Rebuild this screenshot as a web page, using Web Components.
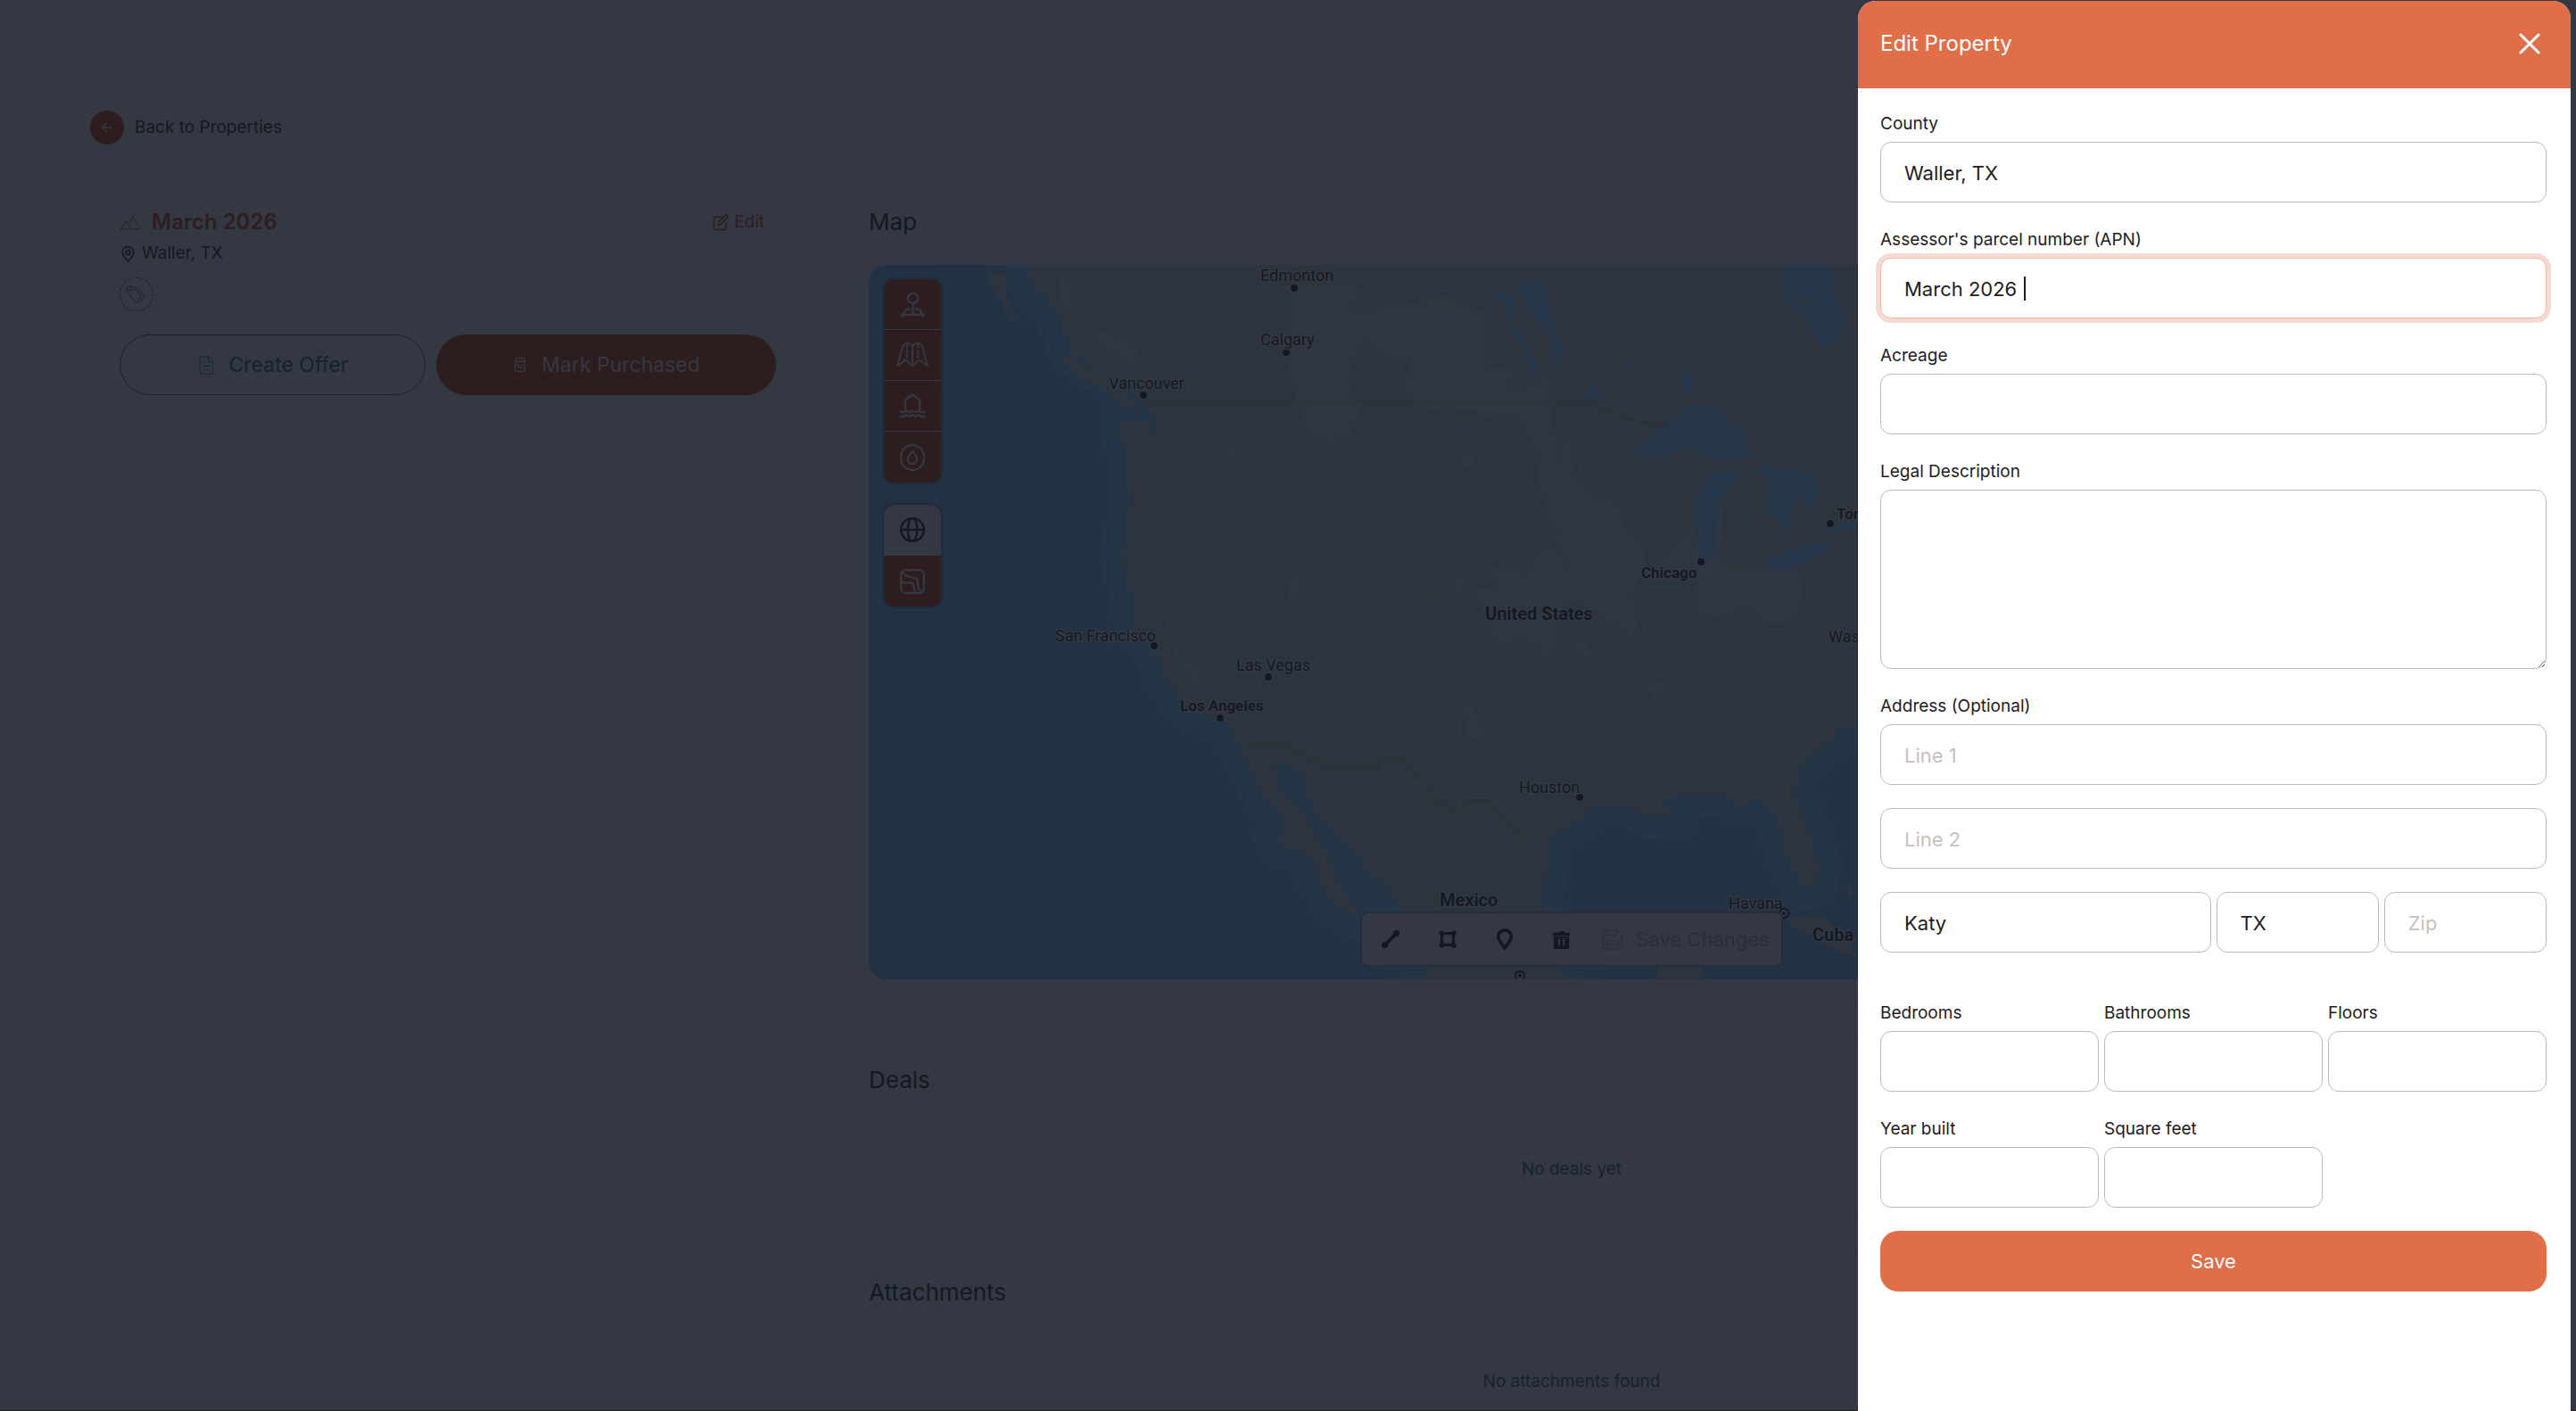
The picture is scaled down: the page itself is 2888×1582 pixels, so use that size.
<!DOCTYPE html>
<html lang="en">
<head>
<meta charset="utf-8">
<title>Edit Property</title>
<style>
  :root {
    --page: #343842; --line: #30353f; --ink: #131824; --ink-soft: #172130;
    --brand-dim: #2e1d1f; --brand: #df6e49; --faint: #292d39;
  }
  body { margin: 0; font-family: Inter, "Liberation Sans", sans-serif; background: var(--page); }
</style>
</head>
<body>
<app-shell>
  <back-link>Back to Properties</back-link>
  <content-columns>
    <property-summary heading="March 2026" place="Waller, TX"></property-summary>
    <panel-stack slot="main">
      <info-panel heading="Map"><property-map></property-map></info-panel>
      <info-panel heading="Deals"><empty-note>No deals yet</empty-note></info-panel>
      <info-panel heading="Attachments"><empty-note>No attachments found</empty-note></info-panel>
    </panel-stack>
  </content-columns>
</app-shell>
<side-drawer heading="Edit Property">
  <form-field label="County" value="Waller, TX"></form-field>
  <form-field label="Assessor's parcel number (APN)" value="March 2026 " active></form-field>
  <form-field label="Acreage"></form-field>
  <form-field label="Legal Description" multiline></form-field>
  <form-field label="Address (Optional)" placeholder="Line 1"></form-field>
  <form-field name="Line 2" placeholder="Line 2"></form-field>
  <field-grid columns="4">
    <form-field name="City" value="Katy" wide></form-field>
    <form-field name="State" value="TX"></form-field>
    <form-field name="Zip" placeholder="Zip"></form-field>
  </field-grid>
  <field-grid columns="3" spaced>
    <form-field label="Bedrooms"></form-field>
    <form-field label="Bathrooms"></form-field>
    <form-field label="Floors"></form-field>
    <form-field label="Year built"></form-field>
    <form-field label="Square feet"></form-field>
  </field-grid>
  <save-button>Save</save-button>
</side-drawer>

<script>
const define = (name, render) => customElements.define(name, class extends HTMLElement {
  connectedCallback() {
    if (this.shadowRoot) return;
    this.attachShadow({ mode: 'open' }).innerHTML =
      '<style>*,:host{box-sizing:border-box}button{font:inherit;color:inherit;background:none;border:0;padding:0;margin:0;cursor:pointer}</style>' + render(this);
  }
});

const icons = {
  back: '<path d="M20 12H4M11 5l-7 7 7 7"/>',
  mountains: '<path d="M1 20h22L15 6l-5 8M1 20l6-9 6 9"/>',
  edit: '<path d="M13 4H5a2 2 0 0 0-2 2v14a2 2 0 0 0 2 2h13a2 2 0 0 0 2-2v-8M9 16l1-5 9-9.500a2 2 0 0 1 3 3L13 14z"/>',
  pin: '<path d="M12 23c-4-5-8-9-8-13a8 8 0 0 1 16 0c0 4-4 8-8 13z"/><circle cx="12" cy="10" r="3"/>',
  tags: '<path d="M1 3v7l11 12 6-7L8 3zM11 3l11 11-6 8"/><circle cx="5" cy="7" r="1.500"/>',
  doc: '<path d="M4 1h11l5 6v16H4zM14 1v7h6M8 8h3M8 13h8M8 18h8"/>',
  bag: '<path d="M5 6l2-4h10l2 4v14a2 2 0 0 1-2 2H7a2 2 0 0 1-2-2zM5 7h14M9 11v2a3 3 0 0 0 6 0v-2"/>',
  parcel: '<circle cx="12" cy="5.500" r="5"/><path d="M12 10.500V22M9.500 16.500H5L2 24M14.500 16.500H19L22 24M.500 22h23"/>',
  map: '<path d="M4.500 4.500Q8.500 0 12.500 4.500 16.500 0 20.500 4.500L25 21l-7-5-5.500 5L7 16l-7 5zM12.500 4.500V21"/><path stroke-dasharray="2 2" d="M8 4v12M17 4v12"/>',
  flood: '<path d="M5 16V6.500L12 1l7 5.500V16M.500 17.500q3 2 5.500-1 3 3 6 0 3 3 6 0 2.500 3 5.500 1M.500 22q3 1.500 5.500-1.500 3 3 6 0 3 3 6 0 2.500 3 5.500 1.500"/>',
  drop: '<path d="M1 13a11 11 0 0 0 22 0"/><path stroke-dasharray="4 2" d="M1 11a11 11 0 0 1 22 0"/><path d="M12 6c3 3.500 4.500 5 4.500 7.500a4.500 4.500 0 0 1-9 0C7.500 11 9 9.500 12 6z"/>',
  globe: '<circle cx="12" cy="12" r="11"/><ellipse cx="12" cy="12" rx="4.500" ry="11"/><path d="M1 12h22"/>',
  terrain: '<rect x="1" y="1" width="22" height="22" rx="4"/><path d="M2 3c4 5 6 4 10 5 4 0 5 1 5 6s2 7 4 8M1 12c3 2 6 1 9 1 4 0 3 5 4.500 10"/>',
  line: '<path stroke-width="4" d="M5 19 19 5"/><circle fill="currentColor" cx="5" cy="19" r="3"/><circle fill="currentColor" cx="19" cy="5" r="3"/>',
  poly: '<path stroke-width="3.500" d="M5 5h14v14H5z"/><g fill="currentColor"><circle cx="4.500" cy="4.500" r="2"/><circle cx="19.500" cy="4.500" r="2"/><circle cx="4.500" cy="19.500" r="2"/><circle cx="19.500" cy="19.500" r="2"/></g>',
  marker: '<path stroke-width="4" d="M12 23C8 17 4 13 4 9a8 8 0 0 1 16 0c0 4-4 8-8 14z"/>',
  trash: '<path fill="currentColor" stroke="none" d="M1 3h7l1-2h6l1 2h7v4H1zM2 8h20v13a3 3 0 0 1-3 3H5a3 3 0 0 1-3-3z"/><path stroke="#343842" stroke-width="2" d="M9 11v8M15 11v8"/>',
  disk: '<path d="M4 1h13l6 6v13a3 3 0 0 1-3 3H4a3 3 0 0 1-3-3V4a3 3 0 0 1 3-3zM6 1v6h10V1M5 23V13h14v10M5 17h14"/>',
  close: '<path d="M2 2l20 20M22 2 2 22"/>'
};
const icon = (name, size = 24, weight = 2) =>
  `<svg aria-hidden="true" width="${size}" height="${size}" viewBox="0 0 ${name === 'map' ? 25 : 24} 24" fill="none" stroke="currentColor" stroke-width="${weight}" stroke-linecap="round" stroke-linejoin="round" overflow="visible">${icons[name]}</svg>`;

define('app-shell', () => `
  <style>
    :host { display: block; height: 100vh; overflow: hidden; padding: 124px 305px 0 101px; background: var(--page); color: var(--ink); border-bottom: 1px solid var(--brand-dim); }
  </style><slot></slot>`);

define('back-link', () => `
  <style>
    :host { display: block; font-size: 19px; line-height: 38px; margin-bottom: 40px; }
    a { display: inline-flex; align-items: center; gap: 12px; color: inherit; text-decoration: none; vertical-align: top; }
    span { width: 38px; height: 38px; border-radius: 50%; background: var(--brand-dim); color: var(--page); display: grid; place-items: center; }
  </style><a href="#properties"><span>${icon('back', 16)}</span><slot></slot></a>`);

define('content-columns', () => `
  <style>:host { display: grid; grid-template-columns: 802fr 1642fr; gap: 38px; }</style>
  <slot></slot><slot name="main"></slot>`);

define('panel-stack', () => `
  <style>:host { display: flex; flex-direction: column; gap: 37px; min-width: 0; }</style><slot></slot>`);

define('property-summary', el => `
  <style>
    :host { display: block; border: 1px solid var(--line); border-radius: 20px; padding: 30px 32px; }
    header { display: flex; align-items: center; justify-content: space-between; line-height: 32px; color: var(--brand-dim); }
    h1 { display: flex; align-items: center; gap: 12px; margin: 0; font-size: 24px; font-weight: 600; }
    .edit { display: flex; align-items: center; gap: 6px; font-size: 19px; margin-right: 13px; }
    .place { display: flex; align-items: center; gap: 6px; margin: 5px 0 13px; font-size: 19px; line-height: 28px; }
    .tag { width: 38px; height: 38px; border: 1px dashed var(--ink-soft); border-radius: 50%; display: grid; place-items: center; color: var(--ink-soft); }
    .actions { display: grid; grid-template-columns: 343fr 381fr; gap: 12px; margin-top: 26px; font-size: 23px; }
    .actions button { height: 68px; border-radius: 34px; display: flex; align-items: center; justify-content: center; gap: 15px; }
    .outline { border: 1px solid var(--ink-soft); color: var(--ink-soft); }
    .solid { background: var(--brand-dim); color: var(--page); }
  </style>
  <header><h1>${icon('mountains', 24, 1)}${el.getAttribute('heading')}</h1>
    <button class="edit">${icon('edit', 19, 2)}Edit</button></header>
  <p class="place">${icon('pin', 19)}${el.getAttribute('place')}</p>
  <button class="tag" aria-label="Tags">${icon('tags', 22, 1)}</button>
  <div class="actions">
    <button class="outline">${icon('doc', 21, 1)}Create Offer</button>
    <button class="solid">${icon('bag', 18, 2)}Mark Purchased</button>
  </div>`);

define('info-panel', el => `
  <style>
    :host { display: block; border: 1px solid var(--line); border-radius: 20px; padding: 29px 32px 28px; }
    h2 { margin: 0; font-size: 26px; line-height: 34px; font-weight: 400; }
  </style><h2>${el.getAttribute('heading')}</h2><slot></slot>`);

define('empty-note', () => `
  <style>:host { display: block; margin-top: 69px; padding-bottom: 11px; text-align: center; font-size: 19px; line-height: 28px; color: var(--ink-soft); }</style><slot></slot>`);

const cities = [
  ['Edmonton', 1413, 315, 1451, 323], ['Calgary', 1413, 387, 1442, 395], ['Vancouver', 1243, 436, 1282, 443],
  ['San Francisco', 1183, 719, 1294, 724], ['Las Vegas', 1386, 752, 1422, 759],
  ['Los Angeles', 1323, 797, 1368, 805, 1], ['Chicago', 1840, 648, 1907, 630, 1],
  ['Toronto', 2059, 582, 2052, 587, 1], ['Houston', 1703, 889, 1771, 894], ['Washington', 2050, 720, 2130, 730]
];
const cityMarks = cities.map(([name, x, y, dx, dy, bold]) =>
  `<circle cx="${dx}" cy="${dy}" r="4"/><text x="${x}" y="${y}"${bold ? ' font-size="17" font-weight="600"' : ''}>${name}</text>`).join('');
const coast = 'M1155 297l-4 11 14 22 9-8v18l14 12 2 18 6 5 2 20 17 7 7 10 18 3 10 15 20 10 12 15 8 7 6 16-3 16-5-19-20-3-12-2 2 20 7 25v25l3 20-6 35-4 25 4 30 8 20 2 30 8 12 14 16 9 17 2 12 15 18 5 15 20 11 15 2 15 9 10 13 10 25 13 25 7 20 15 10 12 20-2 10-10 3 10 12 20 5 15 15 3 20 17 20 15 12 8 6 4-6-7-14-15-13-5-25-15-25-10-15-15-25-20-20-5-15-2-12 4-6 13 6 15 7 5 25 10 20 25 25 10 10 15 15 5 15 20 15 20 25 10 25 10 20 8 30 7 18h148l-8-38-15-40-2-35 7-20v-20l5-17 20-13 18-10 2-8 20-4h25l15 8 10 5 20-3 8 6-3-13-15-5 15-8 25-2h35l15 13 20-8 15 10 10 20 7 32 20 37 13-2 3-22-7-30-10-25-10-30 10-30 30-25 10-12 18-3 50-60 100-50 317-80V297z';

define('property-map', () => `
  <style>
    :host { display: grid; position: relative; margin-top: 31px; height: 801px; border-radius: 20px; overflow: hidden; background: #223143; }
    .canvas { grid-area: 1/1; width: 100%; height: 100%; display: block; font-family: Roboto, sans-serif; font-size: 18px; }
    .layers { position: absolute; left: 17px; top: 16px; display: grid; gap: 25px; color: var(--page); }
    .group { width: 64px; border-radius: 12px; overflow: hidden; background: var(--brand-dim); box-shadow: 0 0 0 2px #1e2b3b; }
    .group button { display: grid; place-items: center; width: 64px; height: 57px; border-bottom: 1px solid var(--page); }
    .group button:last-child { border-bottom: 0; }
    .group .on { background: var(--page); color: var(--ink); }
    .tools { position: absolute; bottom: 16px; left: 50%; transform: translateX(-50%); display: flex; height: 58px; background: var(--page); border-radius: 6px; box-shadow: 0 0 0 2px #272d38; }
    .tools button { width: 64px; display: grid; place-items: center; border-right: 1px solid var(--line); }
    .tools .save { width: 214px; display: flex; align-items: center; justify-content: center; gap: 15px; border: 0; font-size: 22px; color: var(--faint); }
  </style>
  <svg class="canvas" viewBox="974 297 1576 801" preserveAspectRatio="xMinYMin slice" role="img" aria-label="Map of North America">
    <g fill="none" stroke-linejoin="round"><path d="${coast}" stroke="#233345" stroke-width="90"/><path d="${coast}" stroke="#243547" stroke-width="50"/></g>
    <path d="${coast}" fill="#2d343d"/>
    <path fill="#2d343d" d="M1107 305l23 1-2 24 13 34-16-19-15-27zM1190 400l10-2 10 10 30 12 22 20 13 15 5 11-18-8-22-18-25-15-17-13z"/>
    <g transform="translate(950 210) scale(.4464 .3333)" fill="#30363f">
      <path d="M1100 330l150-10 60 30-50 50 20 30 60-30 90-10 80-25 30 30 60 20v340l-100-10-60 15-40-70 10-110-60-10-40-60-30 30-20 120 30 80-30 110-50 10-60-40-30-140-20-110zM1170 740l90-15 10 50-50 60-30-10zM610 470l40 20 80 50 10 80-40-10-20-50-60-40zM535 300l20-5 10 70 15 40-30 10-15-40zM955 870l20 5 5 40-25-10zM1110 1320l30-30-10 90-20 10z"/>
      <path d="M785 1410l20 10 15 110 40 70 40 60 5 40-30-10-50-110zM1530 1310l30-10v80l-40-20zM1460 1350l35 40-30 20z"/>
    </g>
    <g transform="translate(1600 280) scale(.3333 .4335)">
      <path fill="#30363f" d="M0 130h70l10 60 70 20 40 60-20 50 60-20 60 10-10 60 140-50v150l60 15 10 90 80 60 70 15 20 60 70 60 10 60 80-60 60-40 60-90 60 10-10 140 40 40h240l-20 110-50 30h-60l-80-50-30 20-90 20-50-40 10-60-100-10-80-10-30 60 30 40-20 60-40-10-100-60-90-20-40 60 10 60-40 50-30-50-50-20-90 10-50-80-20-60 90-10-60-50 80 5 60 10 50-70 60-30-30-40-40-100-10-90-70-80-100 10-60-40-80 0zM240 640l30-10 10 20-20 15zM100 540l50-10 10 30-50 10zM110 1175l40 5 50 60-30 30-30-10zM740 1130l60-20 10 20-50 40zM500 1020l30-20 30 60-50-10z"/>
      <g fill="#25364a">
        <path d="M690 530l70-55 80-45 50-35 100 15 20 42 55 8 25 85-30-5-100 5-80-35-110 30z"/>
        <path d="M900 660l50-80 90-12 60 5 40-15 150 20 40 60-30 25-60-20-25 70-15 30-15-50-30-10-30 20 20-60-5-60-90-12-40 60-30 10-10 140-30 30-30-30-10-90z"/>
        <path d="M1140 820l10-25 130-30 100-15-60 40-110 40zM1330 730l70-25h60v18z"/>
        <path d="M315 85l40-10 40 20 40 120 25 40-30 60-15-100-40-20-60-70zM210 130l15-30 70 20-10 70 40 50 50 60-20 20-25-60-50-45-15-80zM1200 38h155l20 90 30 50-20 60-60 15-50-70-70-50zM845 340l30-30 25 20-5 40-30-5zM520 390l30-45 40 30-30 15zM630 285l30 20 40-10-30 25z"/>
      </g>
      <path fill="none" stroke="#25364a" stroke-width="5" d="M80 450l60 10 30 22h30M425 290l-15 90 20 80 15 90M300 690l30 50 100 20 50 60"/>
      <path fill="#2d343d" d="M1220 130l50-8 15 25z"/>
    </g>
    <g fill="#2d343d"><path d="M1855 1116l4-35 30-10 20 12-6 32zM2003 1030l35-5 30 20 15 30-25-10-50-26zM2070 990l10 12-8 4z"/></g>
    <g fill="none" stroke="#2a2830" stroke-width="1" stroke-dasharray="2 2"><path d="M1280 450h500l45 20 45 8M1395 836h45l55 26h50v-9h30l25 24 12 24 20 6 14-10h24l40 50"/></g>
    <g fill="#131824" stroke="#333842" stroke-width="3" paint-order="stroke">
      ${cityMarks}
      <g font-size="20" font-weight="600"><text x="1665" y="695">United States</text><text x="1614" y="1016">Mexico</text><text x="2032" y="1055">Cuba</text></g>
      <text x="1938" y="1019">Havana</text>
    </g>
    <g fill="#343842" stroke="#131824" stroke-width="2"><circle cx="2000" cy="1024" r="5"/><circle cx="1704" cy="1094" r="5"/></g>
    <g fill="#131824"><circle cx="2000" cy="1024" r="2"/><circle cx="1704" cy="1094" r="2"/></g>
  </svg>
  <div class="layers">
    <div class="group">
      <button aria-label="Parcels">${icon('parcel', 27)}</button><button aria-label="Map style">${icon('map', 34, 1.5)}</button>
      <button aria-label="Flood zones">${icon('flood', 28)}</button><button aria-label="Wells">${icon('drop', 28)}</button>
    </div>
    <div class="group"><button class="on" aria-label="Satellite">${icon('globe', 28)}</button><button aria-label="Terrain">${icon('terrain', 28)}</button></div>
  </div>
  <div class="tools">
    <button aria-label="Draw line">${icon('line', 22)}</button><button aria-label="Draw polygon">${icon('poly', 22)}</button>
    <button aria-label="Add marker">${icon('marker', 22)}</button><button aria-label="Delete">${icon('trash', 21)}</button>
    <button class="save" disabled>${icon('disk', 23, 1)}Save Changes</button>
  </div>`);

define('side-drawer', el => `
  <style>
    :host { position: fixed; z-index: 2; top: 1px; bottom: 0; right: 6px; width: 799px; display: flex; flex-direction: column; background: #fff; border-radius: 20px 20px 0 0; overflow: hidden; color: #221c22; }
    header { display: flex; align-items: center; justify-content: space-between; height: 98px; flex: none; padding: 0 34px 3px 25px; background: var(--brand); color: #fff; }
    h2 { margin: 0; font-size: 24px; font-weight: 400; }
    button { display: grid; place-items: center; }
    form { display: flex; flex-direction: column; gap: 26px; padding: 24px 27px 26px 25px; }
  </style>
  <header><h2>${el.getAttribute('heading')}</h2><button aria-label="Close">${icon('close', 24, 3)}</button></header>
  <form><slot></slot></form>`);

define('field-grid', el => `
  <style>:host { display: grid; grid-template-columns: repeat(${el.getAttribute('columns')}, minmax(0, 1fr)); gap: 26px 6px; } :host([spaced]) { margin-top: 26px; }</style><slot></slot>`);

define('form-field', el => {
  const get = name => el.getAttribute(name) || '';
  const label = el.hasAttribute('label') ? `<label for="control">${get('label')}</label>` : '';
  const aria = label ? '' : `aria-label="${get('name')}"`;
  const control = el.hasAttribute('multiline')
    ? `<textarea id="control" ${aria}></textarea>`
    : `<input id="control" type="text" ${aria} value="${get('value')}" placeholder="${get('placeholder')}">`;
  return `
  <style>
    :host { display: block; min-width: 0; }
    :host([wide]) { grid-column: span 2; }
    label { display: block; font-size: 19px; line-height: 32px; margin-bottom: 4px; }
    input, textarea { display: block; width: 100%; height: 68px; margin: 0; padding: 2px 26px 0; border: 1px solid #bcb9bb; border-radius: 12px; background: #fff; font: inherit; font-size: 22px; color: #221c22; outline: 0; }
    textarea { height: 201px; padding: 20px 26px; resize: vertical; }
    ::placeholder { color: #c8bfbd; opacity: 1; }
    :host([active]) input { border-color: #f0b9a6; box-shadow: 0 0 0 5px #f4dad2; caret-color: transparent; background: linear-gradient(#221c22, #221c22) 160px center / 2px 27px no-repeat #fff; }
  </style>${label}${control}`;
});

define('save-button', () => `
  <style>:host { display: block; } button { width: 100%; height: 68px; border-radius: 20px; background: var(--brand); color: #fff; font-size: 22px; }</style>
  <button type="submit"><slot></slot></button>`);
</script>
</body>
</html>
